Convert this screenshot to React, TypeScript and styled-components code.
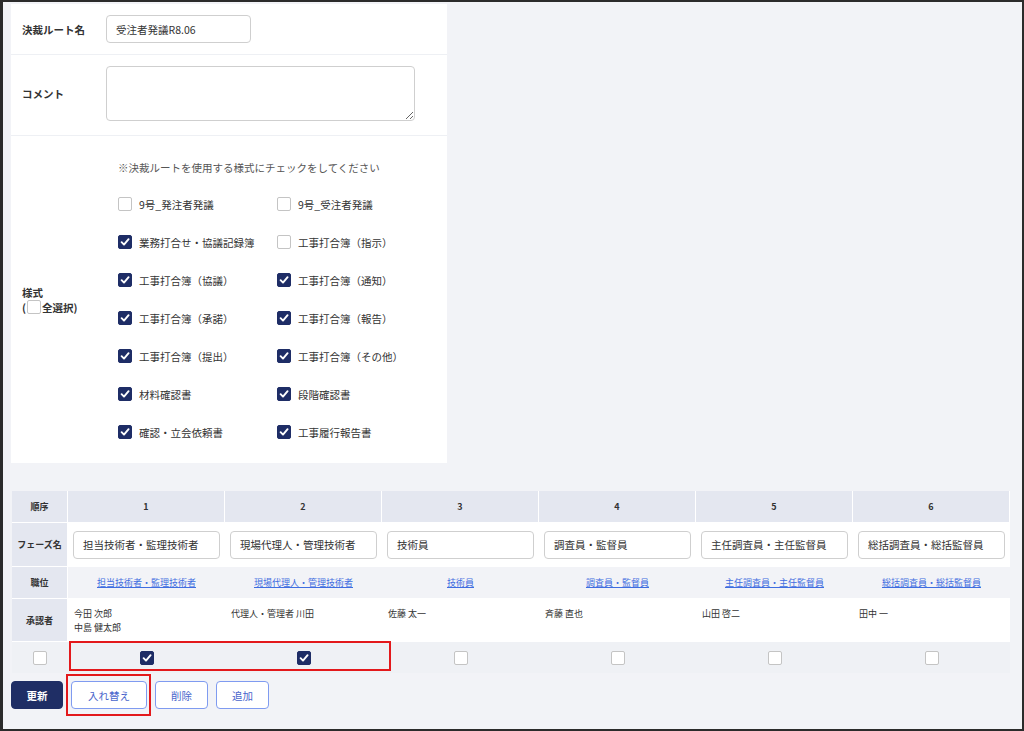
import styled, { createGlobalStyle } from 'styled-components';

const GlobalStyle = createGlobalStyle`
  html, body {
    margin: 0;
    padding: 0;
  }
  body {
    font-family: "Noto Sans CJK JP", "Noto Sans", sans-serif;
    color: #333;
  }
  * {
    box-sizing: border-box;
  }
`;

// 様式のチェック一覧（2列）
const forms: [string, boolean][] = [
  ['9号_発注者発議', false],
  ['9号_受注者発議', false],
  ['業務打合せ・協議記録簿', true],
  ['工事打合簿（指示）', false],
  ['工事打合簿（協議）', true],
  ['工事打合簿（通知）', true],
  ['工事打合簿（承諾）', true],
  ['工事打合簿（報告）', true],
  ['工事打合簿（提出）', true],
  ['工事打合簿（その他）', true],
  ['材料確認書', true],
  ['段階確認書', true],
  ['確認・立会依頼書', true],
  ['工事履行報告書', true],
];

interface Phase {
  no: number;
  name: string;
  approvers: string[];
  checked: boolean;
}

const phases: Phase[] = [
  { no: 1, name: '担当技術者・監理技術者', approvers: ['今田 次郎', '中島 健太郎'], checked: true },
  { no: 2, name: '現場代理人・管理技術者', approvers: ['代理人・管理者 川田'], checked: true },
  { no: 3, name: '技術員', approvers: ['佐藤 太一'], checked: false },
  { no: 4, name: '調査員・監督員', approvers: ['斉藤 直也'], checked: false },
  { no: 5, name: '主任調査員・主任監督員', approvers: ['山田 啓二'], checked: false },
  { no: 6, name: '総括調査員・総括監督員', approvers: ['田中 一'], checked: false },
];

const Frame = styled.div`
  width: 1024px;
  height: 731px;
  border: 2px solid #2b2b2b;
  border-left-width: 3px;
  background: #f2f3f7;
  padding: 2px 0 0 8px;
  overflow: hidden;
`;

const Panel = styled.section`
  width: 436px;
  background: #fff;
`;

const FormRow = styled.div<{ $height?: number; $pad?: string }>`
  display: flex;
  align-items: center;
  min-height: ${(p) => (p.$height ? `${p.$height}px` : 'auto')};
  padding: ${(p) => p.$pad || '0'};
  border-bottom: 1px solid #eef0f4;

  &:last-child {
    border-bottom: none;
  }
`;

const RowLabel = styled.div`
  width: 95px;
  flex-shrink: 0;
  padding-left: 11px;
  font-size: 10.5px;
  font-weight: 700;
  line-height: 15px;
`;

const TextInput = styled.div<{ $width: number }>`
  width: ${(p) => p.$width}px;
  height: 28px;
  border: 1px solid #cfcfcf;
  border-radius: 4px;
  display: flex;
  align-items: center;
  padding-left: 9px;
  font-size: 10.5px;
  color: #333;
  background: #fff;
  white-space: nowrap;
`;

const TextArea = styled.textarea`
  display: block;
  width: 309px;
  height: 55px;
  border: 1px solid #cfcfcf;
  border-radius: 4px;
  font-family: inherit;
  font-size: 10.5px;
  resize: both;
`;

const FormsBody = styled.div`
  padding: 24px 0 12px 12px;
`;

const Note = styled.div`
  font-size: 10.5px;
  line-height: 15px;
  color: #555;
  margin-bottom: 10px;
`;

const CheckGrid = styled.div`
  display: grid;
  grid-template-columns: 159px 159px;
  grid-auto-rows: 38px;
`;

const CheckItem = styled.label`
  display: flex;
  align-items: center;
  gap: 7px;
  font-size: 10.5px;
  color: #333;
  white-space: nowrap;
`;

const Box = styled.span<{ $checked?: boolean }>`
  width: 14px;
  height: 14px;
  flex-shrink: 0;
  border-radius: 2px;
  display: inline-flex;
  align-items: center;
  justify-content: center;
  background: ${(p) => (p.$checked ? '#1e2d66' : '#fff')};
  border: 1px solid ${(p) => (p.$checked ? '#1e2d66' : '#c4c4c4')};
`;

const SelectAll = styled.span`
  display: inline-flex;
  align-items: center;
  gap: 1px;
`;

function CheckBox({ checked }: { checked?: boolean }) {
  return (
    <Box $checked={checked}>
      {checked && (
        <svg width="10" height="10" viewBox="0 0 10 10">
          <path d="M1.6 5.2 L4 7.6 L8.6 2.2" fill="none" stroke="#fff" strokeWidth="1.9" strokeLinecap="round" strokeLinejoin="round" />
        </svg>
      )}
    </Box>
  );
}

const TableWrap = styled.div`
  position: relative;
  margin: 28px 0 0 1px;
  width: 998px;
`;

const Table = styled.div`
  display: grid;
  grid-template-columns: 56px repeat(6, 157px);
`;

type CellKind = 'head' | 'label' | 'white' | 'gray' | 'check';

const cellBg: Record<CellKind, string> = {
  head: '#e4e7f0',
  label: '#e4e7f0',
  white: '#fff',
  gray: '#f2f3f7',
  check: '#eff1f5',
};

const Cell = styled.div<{ $kind: CellKind; $h: number; $top?: boolean }>`
  height: ${(p) => p.$h}px;
  background: ${(p) => cellBg[p.$kind]};
  border-bottom: ${(p) => (p.$kind === 'check' ? 'none' : '1px solid #fff')};
  border-right: ${(p) => (p.$kind === 'head' || p.$kind === 'label' ? '1px solid #fff' : 'none')};
  display: flex;
  align-items: ${(p) => (p.$top ? 'flex-start' : 'center')};
  justify-content: ${(p) => (p.$top ? 'flex-start' : 'center')};
  padding: ${(p) => (p.$top ? '8px 6px' : '0 5px')};
  font-size: 9px;
  font-weight: ${(p) => (p.$kind === 'head' || p.$kind === 'label' ? 700 : 400)};
  color: #333;
`;

const PhaseInput = styled(TextInput)`
  width: 100%;
`;

const RoleLink = styled.a`
  font-size: 9px;
  color: #3f6de0;
  text-decoration: underline;
  white-space: nowrap;
`;

const Names = styled.div`
  font-size: 9px;
  line-height: 14px;
  white-space: nowrap;
`;

const Highlight = styled.div`
  position: absolute;
  left: 57px;
  top: 150px;
  width: 322px;
  height: 30px;
  border: 2px solid #e3191c;
  pointer-events: none;
`;

const ButtonBar = styled.div`
  display: flex;
  gap: 8px;
  margin-top: 8px;
`;

const Button = styled.button<{ $primary?: boolean; $marked?: boolean }>`
  position: relative;
  height: 28px;
  padding: 0 12px;
  border-radius: 4px;
  font-family: inherit;
  font-size: 10.5px;
  font-weight: ${(p) => (p.$primary ? 700 : 400)};
  background: ${(p) => (p.$primary ? '#1f2e65' : '#fff')};
  color: ${(p) => (p.$primary ? '#fff' : '#4a66cc')};
  border: 1px solid ${(p) => (p.$primary ? '#1f2e65' : '#7f9bf0')};
  min-width: ${(p) => (p.$marked ? 76 : p.$primary ? 52 : 53)}px;

  ${(p) =>
    p.$marked &&
    `
    &::after {
      content: '';
      position: absolute;
      top: -8px;
      bottom: -8px;
      left: -6px;
      right: -5px;
      border: 2px solid #e3191c;
      pointer-events: none;
    }
  `}
`;

export default function App() {
  return (
    <>
      <GlobalStyle />
      <Frame>
        <Panel>
          <FormRow $height={51}>
            <RowLabel>決裁ルート名</RowLabel>
            <TextInput $width={145}>受注者発議R8.06</TextInput>
          </FormRow>
          <FormRow $pad="11px 0 14px">
            <RowLabel>コメント</RowLabel>
            <TextArea defaultValue="" />
          </FormRow>
          <FormRow>
            <RowLabel>
              様式
              <br />
              <SelectAll>
                (<CheckBox />
                全選択)
              </SelectAll>
            </RowLabel>
            <FormsBody>
              <Note>※決裁ルートを使用する様式にチェックをしてください</Note>
              <CheckGrid>
                {forms.map(([label, checked]) => (
                  <CheckItem key={label}>
                    <CheckBox checked={checked} />
                    {label}
                  </CheckItem>
                ))}
              </CheckGrid>
            </FormsBody>
          </FormRow>
        </Panel>

        <TableWrap>
          <Table>
            <Cell $kind="head" $h={32}>順序</Cell>
            {phases.map((p) => (
              <Cell key={`no${p.no}`} $kind="head" $h={32}>{p.no}</Cell>
            ))}

            <Cell $kind="label" $h={44}>フェーズ名</Cell>
            {phases.map((p) => (
              <Cell key={`name${p.no}`} $kind="white" $h={44}>
                <PhaseInput $width={146}>{p.name}</PhaseInput>
              </Cell>
            ))}

            <Cell $kind="label" $h={32}>職位</Cell>
            {phases.map((p) => (
              <Cell key={`role${p.no}`} $kind="gray" $h={32}>
                <RoleLink href="#">{p.name}</RoleLink>
              </Cell>
            ))}

            <Cell $kind="label" $h={43}>承認者</Cell>
            {phases.map((p) => (
              <Cell key={`ap${p.no}`} $kind="white" $h={43} $top>
                <Names>
                  {p.approvers.map((n) => (
                    <div key={n}>{n}</div>
                  ))}
                </Names>
              </Cell>
            ))}

            <Cell $kind="check" $h={31}>
              <CheckBox />
            </Cell>
            {phases.map((p) => (
              <Cell key={`ck${p.no}`} $kind="check" $h={31}>
                <CheckBox checked={p.checked} />
              </Cell>
            ))}
          </Table>
          <Highlight />
        </TableWrap>

        <ButtonBar>
          <Button $primary>更新</Button>
          <Button $marked>入れ替え</Button>
          <Button>削除</Button>
          <Button>追加</Button>
        </ButtonBar>
      </Frame>
    </>
  );
}
